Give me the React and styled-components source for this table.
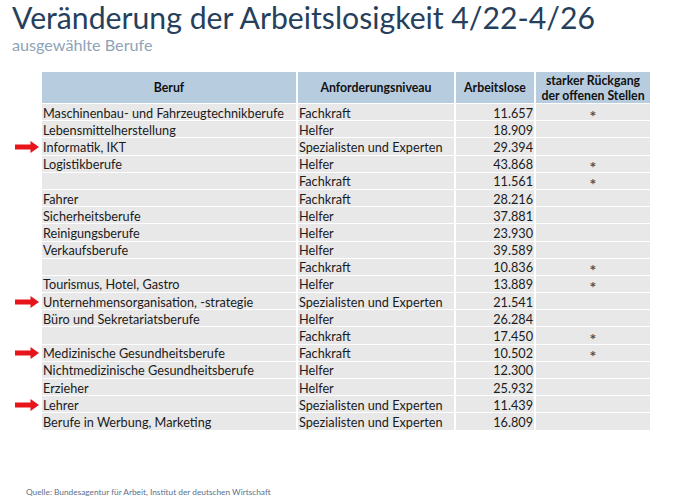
import React from 'react'
import styled, { createGlobalStyle } from 'styled-components'

const GlobalStyle = createGlobalStyle`
  html, body {
    margin: 0;
    padding: 0;
    background: #ffffff;
  }
  body {
    font-family: Lato, "Open Sans", "Liberation Sans", sans-serif;
    color: #1b1b1b;
  }
`

const Page = styled.div`
  width: 680px;
  height: 502px;
  box-sizing: border-box;
  padding: 0 0 0 12px;
  display: flex;
  flex-direction: column;
  overflow: hidden;
`

const Title = styled.h1`
  margin: 0;
  font-size: 30.2px;
  font-weight: 400;
  line-height: 35px;
  color: #263f5c;
  white-space: nowrap;
`

const Subtitle = styled.div`
  font-size: 16.2px;
  line-height: 20px;
  color: #8ea3b8;
`

const Grid = styled.div`
  margin-top: 17px;
  margin-left: -12px;
  display: grid;
  grid-template-columns: 42px 256px 158px 80px 114px;
  grid-template-rows: 32px;
  grid-auto-rows: 17.2px;
  font-size: 12.7px;
`

const HeadCell = styled.div`
  box-sizing: border-box;
  background: #b8cce0;
  border-right: ${p => (p.$last ? '0' : '2px solid #ffffff')};
  border-bottom: 1px solid #ffffff;
  display: flex;
  align-items: center;
  justify-content: center;
  text-align: center;
  font-size: 12.3px;
  font-weight: 700;
  line-height: 15px;
  color: #111;
`

const ArrowSlot = styled.div`
  display: flex;
  align-items: center;
  justify-content: flex-end;
  padding-right: 3px;
`

const Cell = styled.div`
  box-sizing: border-box;
  background: #e8e8e8;
  border-right: ${p => (p.$last ? '0' : '2px solid #ffffff')};
  border-bottom: 1px solid #ffffff;
  padding: 1px 1px 0;
  display: flex;
  align-items: center;
  justify-content: ${p => p.$align || 'flex-start'};
  white-space: nowrap;
  line-height: 16px;
  color: #1b1b1b;
`

const Star = styled.span`
  display: block;
  font-size: 16px;
  line-height: 16px;
  font-weight: 700;
  color: #505050;
  transform: translateY(3px);
`

const Source = styled.div`
  margin-top: auto;
  margin-left: 14px;
  margin-bottom: 5px;
  font-size: 8.3px;
  color: #5d7089;
`

const Arrow = () => (
  <svg width="24" height="12" viewBox="0 0 24 12">
    <path d="M0 3.6 H15.5 V0 L24 6 L15.5 12 V8.4 H0 Z" fill="#e8141b" />
  </svg>
)

const rows = [
  ['Maschinenbau- und Fahrzeugtechnikberufe', 'Fachkraft', '11.657', true, false],
  ['Lebensmittelherstellung', 'Helfer', '18.909', false, false],
  ['Informatik, IKT', 'Spezialisten und Experten', '29.394', false, true],
  ['Logistikberufe', 'Helfer', '43.868', true, false],
  ['', 'Fachkraft', '11.561', true, false],
  ['Fahrer', 'Fachkraft', '28.216', false, false],
  ['Sicherheitsberufe', 'Helfer', '37.881', false, false],
  ['Reinigungsberufe', 'Helfer', '23.930', false, false],
  ['Verkaufsberufe', 'Helfer', '39.589', false, false],
  ['', 'Fachkraft', '10.836', true, false],
  ['Tourismus, Hotel, Gastro', 'Helfer', '13.889', true, false],
  ['Unternehmensorganisation, -strategie', 'Spezialisten und Experten', '21.541', false, true],
  ['Büro und Sekretariatsberufe', 'Helfer', '26.284', false, false],
  ['', 'Fachkraft', '17.450', true, false],
  ['Medizinische Gesundheitsberufe', 'Fachkraft', '10.502', true, true],
  ['Nichtmedizinische Gesundheitsberufe', 'Helfer', '12.300', false, false],
  ['Erzieher', 'Helfer', '25.932', false, false],
  ['Lehrer', 'Spezialisten und Experten', '11.439', false, true],
  ['Berufe in Werbung, Marketing', 'Spezialisten und Experten', '16.809', false, false],
]

export default function App() {
  return (
    <Page>
      <GlobalStyle />
      <Title>Veränderung der Arbeitslosigkeit 4/22-4/26</Title>
      <Subtitle>ausgewählte Berufe</Subtitle>
      <Grid>
        <ArrowSlot />
        <HeadCell>Beruf</HeadCell>
        <HeadCell>Anforderungsniveau</HeadCell>
        <HeadCell>Arbeitslose</HeadCell>
        <HeadCell $last>starker Rückgang<br />der offenen Stellen</HeadCell>
        {rows.map(([beruf, niveau, zahl, star, arrow], i) => (
          <React.Fragment key={i}>
            <ArrowSlot>{arrow && <Arrow />}</ArrowSlot>
            <Cell>{beruf}</Cell>
            <Cell>{niveau}</Cell>
            <Cell $align="flex-end">{zahl}</Cell>
            <Cell $align="center" $last>{star && <Star>*</Star>}</Cell>
          </React.Fragment>
        ))}
      </Grid>
      <Source>Quelle: Bundesagentur für Arbeit, Institut der deutschen Wirtschaft</Source>
    </Page>
  )
}
